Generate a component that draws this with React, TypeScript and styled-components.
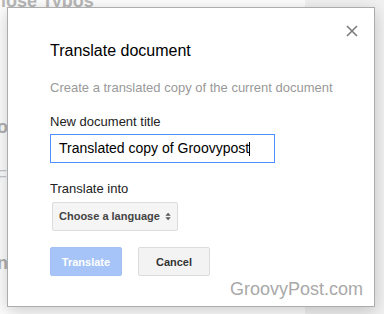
import * as React from "react";
import styled, { createGlobalStyle } from "styled-components";

const GlobalStyle = createGlobalStyle`
  html, body {
    margin: 0;
    padding: 0;
    width: 384px;
    height: 314px;
    overflow: hidden;
    font-family: "Liberation Sans", Arial, sans-serif;
  }
`;

const App = () => {
  return (
    <Screen>
      <GlobalStyle />
      <DocPage>
        <DocHeading>lose Typos</DocHeading>
        <DocLine $top={106} $bold>o</DocLine>
        <DocLine $top={30}>F</DocLine>
        <DocLine $top={66} $bold>n</DocLine>
      </DocPage>
      <Canvas />

      <Dialog>
        <CloseButton aria-label="Close">
          <svg width="12" height="12" viewBox="0 0 12 12">
            <path d="M1 1 L11 11 M11 1 L1 11" stroke="#777" strokeWidth="1.5" fill="none" />
          </svg>
        </CloseButton>

        <Title>Translate document</Title>
        <Subtitle>Create a translated copy of the current document</Subtitle>

        <Label>New document title</Label>
        <TextBox>
          Translated copy of Groovypost
          <Caret />
        </TextBox>

        <Label>Translate into</Label>
        <Select>
          Choose a language
          <svg width="8" height="11" viewBox="0 0 8 11">
            <polygon points="0.5,4.5 4,0.5 7.5,4.5" fill="#555" />
            <polygon points="0.5,6.5 4,10.5 7.5,6.5" fill="#555" />
          </svg>
        </Select>

        <Buttons>
          <Button $primary>Translate</Button>
          <Button>Cancel</Button>
        </Buttons>

        <Watermark>GroovyPost.com</Watermark>
      </Dialog>
    </Screen>
  );
};

export default App;

const Screen = styled.div`
  position: relative;
  width: 384px;
  height: 314px;
  display: flex;
  background: #f1f1f1;
  overflow: hidden;
`;

const DocPage = styled.div`
  width: 305px;
  height: 100%;
  background: #fdfdfd;
  display: flex;
  flex-direction: column;
  align-items: flex-start;
`;

const Canvas = styled.div`
  flex: 1;
`;

const DocHeading = styled.div`
  font-size: 18px;
  font-weight: bold;
  color: #b8b8b8;
  line-height: 20px;
  margin-top: -9px;
  margin-left: 1px;
`;

const DocLine = styled.div<{ $top: number; $bold?: boolean }>`
  margin-top: ${(p) => p.$top}px;
  margin-left: -3px;
  font-size: ${(p) => (p.$bold ? 18 : 16)}px;
  font-weight: ${(p) => (p.$bold ? "bold" : "normal")};
  color: ${(p) => (p.$bold ? "#b0b0b0" : "#c8c8c8")};
  line-height: 20px;
`;

const Dialog = styled.div`
  position: absolute;
  left: 7px;
  top: 7px;
  width: 368px;
  height: 300px;
  box-sizing: border-box;
  background: #fff;
  border: 1px solid #acacac;
  box-shadow: 0 4px 16px rgba(0, 0, 0, 0.2);
  padding: 33px 42px 0 42px;
  display: flex;
  flex-direction: column;
  align-items: flex-start;
`;

const CloseButton = styled.div`
  position: absolute;
  top: 17px;
  right: 16px;
  width: 12px;
  height: 12px;
  display: flex;
`;

const Title = styled.div`
  font-size: 16px;
  line-height: 20px;
  color: #000;
`;

const Subtitle = styled.div`
  margin-top: 19px;
  font-size: 13px;
  line-height: 16px;
  color: #999;
  white-space: nowrap;
`;

const Label = styled.div`
  margin-top: 18px;
  font-size: 13px;
  line-height: 16px;
  color: #222;
`;

const TextBox = styled.div`
  margin-top: 4px;
  width: 225px;
  height: 29px;
  box-sizing: border-box;
  border: 1px solid #4d90fe;
  padding: 0 8px;
  font-size: 14px;
  line-height: 27px;
  color: #000;
  display: flex;
  align-items: center;
  white-space: nowrap;
`;

const Caret = styled.span`
  display: inline-block;
  width: 1px;
  height: 14px;
  background: #000;
`;

const Select = styled.div`
  margin-top: 5px;
  margin-left: 2px;
  height: 29px;
  width: 126px;
  box-sizing: border-box;
  border: 1px solid #dcdcdc;
  border-radius: 2px;
  background: #f5f5f5;
  padding: 0 6px;
  font-size: 11px;
  font-weight: bold;
  line-height: 27px;
  color: #444;
  display: flex;
  align-items: center;
  gap: 5px;
  white-space: nowrap;
`;

const Buttons = styled.div`
  margin-top: 16px;
  display: flex;
  gap: 16px;
`;

const Button = styled.div<{ $primary?: boolean }>`
  width: 72px;
  height: 29px;
  box-sizing: border-box;
  border-radius: 2px;
  border: 1px solid ${(p) => (p.$primary ? "#a3c1f5" : "#dcdcdc")};
  background: ${(p) => (p.$primary ? "#a6c4f7" : "#f3f3f3")};
  color: ${(p) => (p.$primary ? "#fff" : "#333")};
  font-size: 11px;
  font-weight: bold;
  display: flex;
  align-items: center;
  justify-content: center;
`;

const Watermark = styled.div`
  position: absolute;
  right: 11px;
  bottom: 7px;
  font-size: 18px;
  line-height: 20px;
  color: #a9a9a9;
`;
